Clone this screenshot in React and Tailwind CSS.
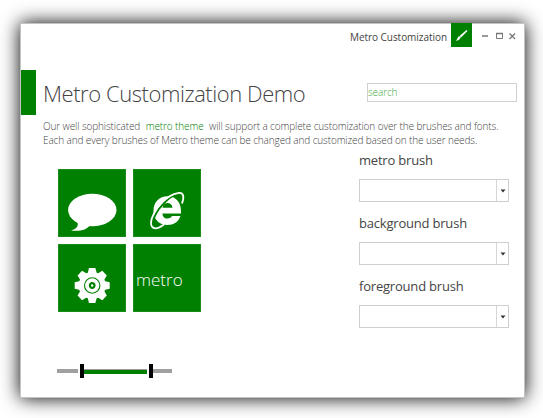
import React from "react";

function Tile({ children }) {
  return <div className="h-[68px] w-[68px] bg-[#008000] outline outline-1 -outline-offset-1 outline-[#1a8c1a]">{children}</div>;
}

function ChatIcon() {
  return (
    <svg viewBox="0 0 68 68" className="h-full w-full" fill="#fff">
      <ellipse cx="34.3" cy="41" rx="24.2" ry="16.2" />
      <path d="M18 51C22 56 19 60 13 61.5C22 62.5 29 61 32 56Z" />
    </svg>
  );
}

function BrowserIcon() {
  return (
    <svg viewBox="0 0 68 68" className="h-full w-full">
      <path
        d="M48 44.500H29.500C29.500 48 31.500 49.500 34.300 49.500C36.800 49.500 38.300 48.500 39 47H47.500C45.500 53 40.500 56 34.500 56C26 56 20.500 50 20.500 42C20.500 33 26.500 27.300 34.500 27.300C43.500 27.300 48.700 34.500 48 44.500ZM29.500 38.700H39.500C39 35.500 37.300 34 34.500 34C31.700 34 29.900 35.500 29.500 38.700Z"
        fill="#fff"
        fillRule="evenodd"
      />
      <path d="M20.800 57.500C18.500 52 23 42 31 34C38 27 45 23.500 48.500 25" fill="none" stroke="#008000" strokeWidth="1.800" />
      <path
        d="M49 34.500C51.500 28 50.500 23.500 46 23.800C40 24.500 32 29.500 26 36.500C19 45.500 16 55 19.500 58.300C22 60.300 27 58.500 31 55.500"
        fill="none"
        stroke="#fff"
        strokeWidth="1.800"
      />
    </svg>
  );
}

function GearIcon() {
  return (
    <svg viewBox="0 0 68 68" className="h-full w-full">
      <g transform="translate(34.200 41.500)">
        <g fill="#fff">
          <circle r="13.600" />
          {[0, 45, 90, 135, 180, 225, 270, 315].map((angle) => (
            <path key={angle} d="M-4.600 -12L-3.200 -17.500H3.200L4.600 -12Z" transform={`rotate(${angle})`} />
          ))}
        </g>
        <circle r="7.700" fill="none" stroke="#008000" strokeWidth="1.100" />
        <circle r="2.300" fill="none" stroke="#008000" strokeWidth="2.200" />
      </g>
    </svg>
  );
}

function BrushPicker({ label }) {
  return (
    <div className="h-[63px]">
      <div className="h-[27px] whitespace-nowrap text-[13px] leading-[16px] tracking-[-0.2px] text-[#444]">{label}</div>
      <div className="flex h-[23px] w-[150px] border border-[#cfcfcf]">
        <div className="flex-1" />
        <div className="flex w-[12px] items-center justify-center border-l border-[#d6d6d6]">
          <svg width="6" height="4" viewBox="0 0 6 4">
            <path d="M0.500 0.500H5.500L3 3.500Z" fill="#333" />
          </svg>
        </div>
      </div>
    </div>
  );
}

export default function App() {
  return (
    <div className="h-[418px] w-[543px] overflow-hidden bg-white pl-[20px] pt-[23px] font-['Open_Sans',sans-serif]">
      <div className="h-[375px] w-[505px] border border-[#c4c4c4] bg-white shadow-[0_0_18px_#000]">
        <header className="flex h-[46px] justify-end pr-[7px]">
          <span className="mr-[4px] mt-[5px] w-[97px] whitespace-nowrap text-[10px] leading-[16px] tracking-[-0.05px] text-[#444]">Metro Customization</span>
          <div className="-mt-px h-[24px] w-[21px] bg-[#008000]">
            <svg viewBox="0 0 21 24" className="h-full w-full" fill="#fff">
              <path d="M15.500 7L16.500 8L10 14.500L8.500 13Z" />
              <path d="M8 13L9.700 14.700C8.500 16.500 7 17.600 5 17.800C6 16.500 6.500 14.500 8 13Z" />
            </svg>
          </div>
          <svg width="45" height="24" viewBox="0 0 45 24" fill="none" stroke="#777">
            <path d="M10 12H16" strokeWidth="1.500" />
            <path d="M24.500 9.500H30.500V14.500H24.500Z" />
            <path d="M24 9.500H31" strokeWidth="1.500" />
            <path d="M37.500 9.500L43 15M43 9.500L37.500 15" strokeWidth="1.300" />
          </svg>
        </header>
        <div className="flex h-[45px]">
          <div className="w-[15px] bg-[#008000]" />
          <h1 className="ml-[7px] mt-[9px] w-[324px] whitespace-nowrap text-[22px] font-light leading-[29px] tracking-[-0.44px] text-[#444]">Metro Customization Demo</h1>
          <div className="mt-[13px] h-[19px] w-[150px] border border-[#d0d0d0] text-[10px] font-light leading-[16px] tracking-[-0.1px] text-[#3cab3c]">search</div>
        </div>
        <div className="ml-[22px] h-[37px] whitespace-nowrap pt-[4px] text-[10px] font-light leading-[14px] tracking-[-0.11px] text-[#444]">
          <p>
            Our well sophisticated <span className="mx-[3px] text-[#008000]">metro theme</span> will support a complete customization over the brushes and fonts.
          </p>
          <p>Each and every brushes of Metro theme can be changed and customized based on the user needs.</p>
        </div>
        <div className="flex">
          <div className="w-[338px] pl-[37px] pt-[17px]">
            <div className="grid w-[143px] grid-cols-2 gap-[7px]">
              <Tile><ChatIcon /></Tile>
              <Tile><BrowserIcon /></Tile>
              <Tile><GearIcon /></Tile>
              <Tile>
                <div className="pl-[3px] pt-[24px] text-[17px] font-light leading-[24px] text-white">metro</div>
              </Tile>
            </div>
            <div className="-ml-px mt-[52px] flex h-[14px] items-center">
              <div className="h-[4px] w-[21px] bg-[#a0a0a0]" />
              <div className="ml-[2px] h-[14px] w-[4px] bg-black" />
              <div className="h-[5px] w-[63px] border-t border-[#999] bg-[#008000]" />
              <div className="ml-[2px] h-[14px] w-[4px] bg-black" />
              <div className="h-[4px] w-[19px] bg-[#a0a0a0]" />
            </div>
          </div>
          <div>
            <BrushPicker label="metro brush" />
            <BrushPicker label="background brush" />
            <BrushPicker label="foreground brush" />
          </div>
        </div>
      </div>
    </div>
  );
}
